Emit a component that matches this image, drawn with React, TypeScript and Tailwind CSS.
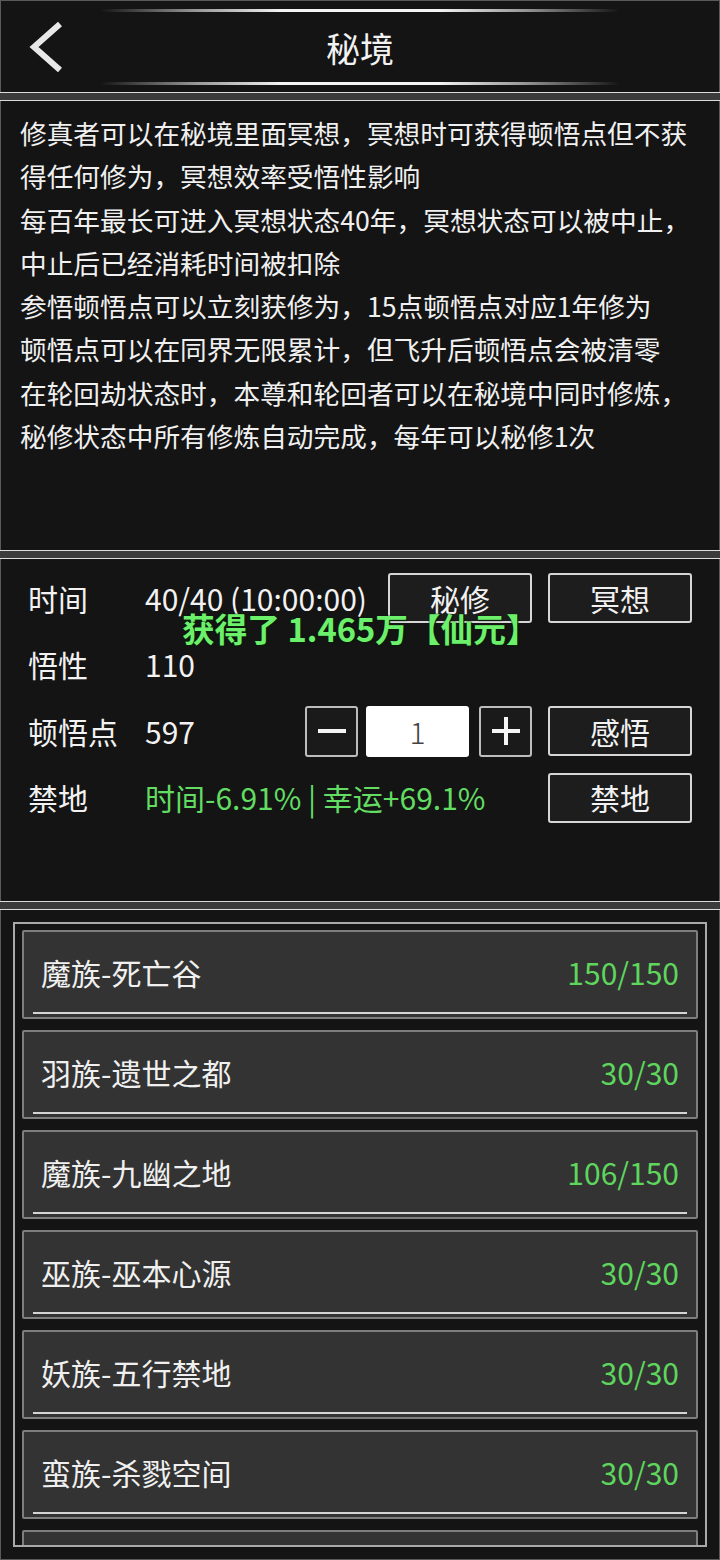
import React from "react";

const intro = [
  "修真者可以在秘境里面冥想，冥想时可获得顿悟点但不获",
  "得任何修为，冥想效率受悟性影响",
  "每百年最长可进入冥想状态40年，冥想状态可以被中止，",
  "中止后已经消耗时间被扣除",
  "参悟顿悟点可以立刻获修为，15点顿悟点对应1年修为",
  "顿悟点可以在同界无限累计，但飞升后顿悟点会被清零",
  "在轮回劫状态时，本尊和轮回者可以在秘境中同时修炼，",
  "秘修状态中所有修炼自动完成，每年可以秘修1次",
];

const realms = [
  { name: "魔族-死亡谷", cur: 150, max: 150 },
  { name: "羽族-遗世之都", cur: 30, max: 30 },
  { name: "魔族-九幽之地", cur: 106, max: 150 },
  { name: "巫族-巫本心源", cur: 30, max: 30 },
  { name: "妖族-五行禁地", cur: 30, max: 30 },
  { name: "蛮族-杀戮空间", cur: 30, max: 30 },
  { name: "灵族-幻灵之境", cur: 30, max: 30 },
];

const font = "font-['Noto_Sans_CJK_SC','Noto_Sans',sans-serif]";

const Divider = () => (
  <div className="h-[9px] shrink-0 border-y border-[#dcdcdc] bg-[#3b3b3b]" />
);

const GlowLine = () => (
  <div className="mx-auto h-[3px] w-[520px] bg-[linear-gradient(90deg,rgba(255,255,255,0),rgba(255,255,255,0.55)_18%,#f4f4f4_35%,#f4f4f4_65%,rgba(255,255,255,0.55)_82%,rgba(255,255,255,0))] blur-[0.4px]" />
);

const ActionButton = ({ label }: { label: string }) => (
  <button className="flex h-[50px] w-[144px] shrink-0 items-center justify-center rounded-[3px] border-2 border-[#d6d6d6] bg-[#1d1d1d] text-[30px] text-[#f2f2f2]">
    {label}
  </button>
);

const StepButton = ({ kind }: { kind: "minus" | "plus" }) => (
  <button className="flex h-[51px] w-[53px] shrink-0 items-center justify-center rounded-[3px] border-2 border-[#bdbdbd] bg-[#1a1a1a]">
    <svg width="30" height="30" viewBox="0 0 30 30">
      <rect x="1" y="13" width="28" height="4" fill="#f5f5f5" />
      {kind === "plus" && <rect x="13" y="1" width="4" height="28" fill="#f5f5f5" />}
    </svg>
  </button>
);

const Row = ({ label, children }: { label: string; children: React.ReactNode }) => (
  <div className="flex h-[50px] items-center">
    <div className="w-[117px] shrink-0 text-[30px] text-[#f2f2f2]">{label}</div>
    {children}
  </div>
);

const RealmCard = ({ name, cur, max }: { name: string; cur: number; max: number }) => (
  <div className="flex h-[89px] shrink-0 flex-col rounded-[2px] border-2 border-[#7e7e7e] bg-[#333333]">
    <div className="flex flex-1 items-center justify-between px-[17px]">
      <span className="text-[30px] text-[#f0f0f0]">{name}</span>
      <span className="text-[30px] text-[#5ed65e]">
        {cur}/{max}
      </span>
    </div>
    <div className="mx-[9px] mb-[3px] h-[2px] bg-[#d4d4d4]" />
  </div>
);

export default function App() {
  return (
    <div className={`flex h-[1560px] w-[720px] flex-col overflow-hidden bg-[#141414] ${font}`}>
      {/* title bar */}
      <header className="flex h-[92px] shrink-0 flex-col border-x border-t border-[#5a5a5a] pt-[8px] pb-[7px]">
        <GlowLine />
        <div className="relative flex flex-1 items-center justify-center">
          <svg
            className="absolute left-[27px] top-1/2 -translate-y-1/2"
            width="36"
            height="50"
            viewBox="0 0 36 50"
          >
            <path d="M32 2 L6 25 L32 48" fill="none" stroke="#e8e8e8" strokeWidth="6" strokeLinejoin="miter" />
          </svg>
          <span className="text-[34px] text-[#f2f2f2]">秘境</span>
        </div>
        <GlowLine />
      </header>

      <Divider />

      {/* description */}
      <section className="h-[449px] shrink-0 border-x border-[#5a5a5a] pl-[19px] pt-[10px] text-[26.7px] leading-[43.3px] text-[#f0f0f0]">
        {intro.map((line) => (
          <div key={line} className="whitespace-nowrap">
            {line}
          </div>
        ))}
      </section>

      <Divider />

      {/* stats */}
      <section className="relative flex h-[342px] shrink-0 flex-col gap-[16.5px] border-x border-[#5a5a5a] pl-[27px] pr-[27px] pt-[14px]">
        <Row label="时间">
          <span className="flex-1 text-[30px] text-[#f2f2f2]">40/40 (10:00:00)</span>
          <div className="flex gap-[16px]">
            <ActionButton label="秘修" />
            <ActionButton label="冥想" />
          </div>
        </Row>
        <Row label="悟性">
          <span className="text-[30px] text-[#f2f2f2]">110</span>
        </Row>
        <Row label="顿悟点">
          <span className="flex-1 text-[30px] text-[#f2f2f2]">597</span>
          <div className="flex items-center">
            <StepButton kind="minus" />
            <div className="ml-[8px] flex h-[51px] w-[103px] items-center justify-center rounded-[3px] bg-white text-[30px] font-light text-[#444]">
              1
            </div>
            <div className="ml-[10px]">
              <StepButton kind="plus" />
            </div>
            <div className="ml-[16px]">
              <ActionButton label="感悟" />
            </div>
          </div>
        </Row>
        <Row label="禁地">
          <span className="flex-1 text-[30px] text-[#62dc62]">时间-6.91% | 幸运+69.1%</span>
          <ActionButton label="禁地" />
        </Row>

        <div className="pointer-events-none absolute left-[181px] top-[50px] whitespace-nowrap text-[32.7px] font-bold leading-[38px] text-[#6cf06c] [text-shadow:0_0_2px_#0a200a,1px_1px_1px_#0a200a]">
          获得了 1.465万【仙元】
        </div>
      </section>

      <Divider />

      {/* realm list */}
      <section className="flex min-h-0 flex-1 flex-col border-x border-b border-[#5a5a5a] p-[12px]">
        <div className="flex min-h-0 flex-1 flex-col gap-[11px] overflow-hidden border-2 border-[#a9a9a9] px-[7px] pt-[6px]">
          {realms.map((r) => (
            <RealmCard key={r.name} {...r} />
          ))}
        </div>
      </section>
    </div>
  );
}
